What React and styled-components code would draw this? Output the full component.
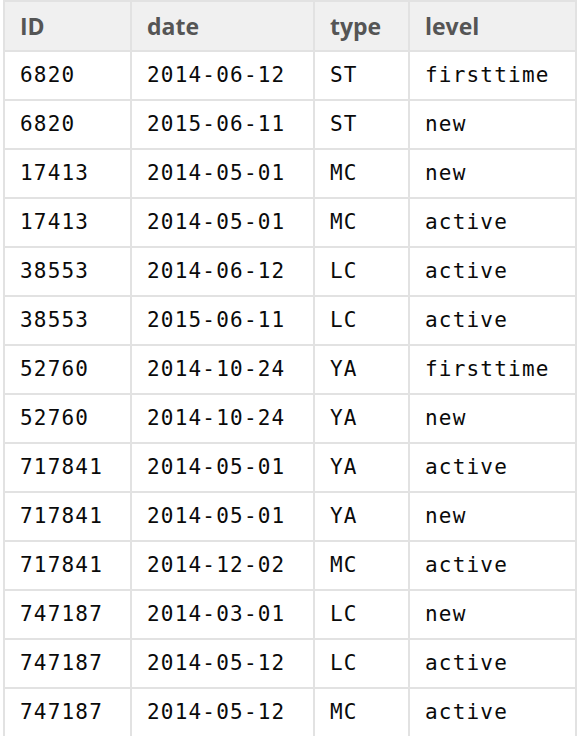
import React from "react";
import styled, { createGlobalStyle } from "styled-components";

const Global = createGlobalStyle`
  html, body { margin: 0; padding: 0; background: #fff; }
  body { overflow: hidden; }
`;

const Page = styled.div`
  padding: 0 0 0 3px;
  width: 578px;
  box-sizing: border-box;
`;

const Table = styled.table`
  border-collapse: collapse;
  table-layout: fixed;
  width: 572px;
`;

const Col = styled.col`
  width: ${(p) => p.$w}px;
`;

const HeadCell = styled.th`
  height: 48px;
  padding: 0 15px;
  text-align: left;
  background: #f0f0f0;
  border: 2px solid #e2e2e2;
  font-family: "Open Sans", "Noto Sans", sans-serif;
  font-weight: 700;
  font-size: 23px;
  color: #555;
  line-height: 24px;
  vertical-align: middle;
`;

const Cell = styled.td`
  height: 45px;
  padding: 0 15px 2px;
  border: 2px solid #e2e2e2;
  font-family: "DejaVu Sans Mono", monospace;
  font-size: 21px;
  letter-spacing: 1.2px;
  color: #0a0a0a;
  line-height: 24px;
  vertical-align: middle;
  white-space: nowrap;
`;

const rows = [
  ["6820", "2014-06-12", "ST", "firsttime"],
  ["6820", "2015-06-11", "ST", "new"],
  ["17413", "2014-05-01", "MC", "new"],
  ["17413", "2014-05-01", "MC", "active"],
  ["38553", "2014-06-12", "LC", "active"],
  ["38553", "2015-06-11", "LC", "active"],
  ["52760", "2014-10-24", "YA", "firsttime"],
  ["52760", "2014-10-24", "YA", "new"],
  ["717841", "2014-05-01", "YA", "active"],
  ["717841", "2014-05-01", "YA", "new"],
  ["717841", "2014-12-02", "MC", "active"],
  ["747187", "2014-03-01", "LC", "new"],
  ["747187", "2014-05-12", "LC", "active"],
  ["747187", "2014-05-12", "MC", "active"],
];

export default function App() {
  return (
    <Page>
      <Global />
      <Table>
        <colgroup>
          <Col $w={127} />
          <Col $w={183} />
          <Col $w={95} />
          <Col $w={167} />
        </colgroup>
        <thead>
          <tr>
            <HeadCell>ID</HeadCell>
            <HeadCell>date</HeadCell>
            <HeadCell>type</HeadCell>
            <HeadCell>level</HeadCell>
          </tr>
        </thead>
        <tbody>
          {rows.map((r, i) => (
            <tr key={i}>
              {r.map((c, j) => (
                <Cell key={j}>{c}</Cell>
              ))}
            </tr>
          ))}
        </tbody>
      </Table>
    </Page>
  );
}
